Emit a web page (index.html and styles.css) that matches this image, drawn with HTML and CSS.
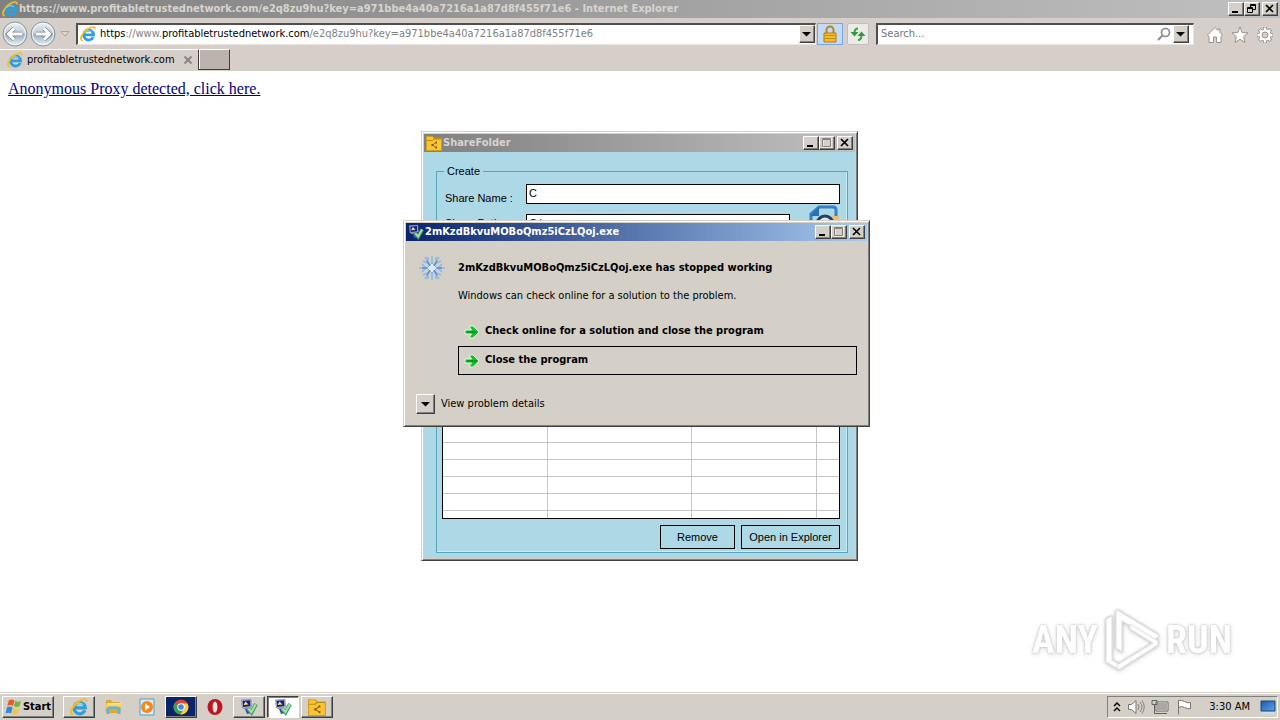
FILE: index.html
```html
<!DOCTYPE html>
<html lang="en">
<head>
<meta charset="utf-8">
<title>profitabletrustednetwork.com - Internet Explorer</title>
<link rel="stylesheet" href="styles.css">
</head>
<body>
<svg class="defs" aria-hidden="true">
  <defs>
    <linearGradient id="gold" x2="0" y2="1"><stop stop-color="#ffe88a"/><stop offset="1" stop-color="#e8a91c"/></linearGradient>
    <linearGradient id="orb" x2="0" y2="1"><stop stop-color="#edf2f5"/><stop offset=".45" stop-color="#c3ced5"/><stop offset=".5" stop-color="#9cabb6"/><stop offset="1" stop-color="#e4f5fc"/></linearGradient>
    <linearGradient id="screen" x2="1" y2="1"><stop stop-color="#1f58a8"/><stop offset="1" stop-color="#5da5e8"/></linearGradient>
  </defs>
  <symbol id="ie" viewBox="0 0 16 16">
    <path d="M13.2 11A5 5 0 1 1 13.6 8.8H5" fill="none" stroke="#2f9fdc" stroke-width="2.800"/>
    <path d="M4.800 6.500q3-3.500 7-.5" fill="none" stroke="#8edaf8" stroke-width="1"/>
    <path d="M2.800 14.900C-1.500 14 2.200 6.500 8 2.800c3.500-2.300 7.300-2.700 6.800.6" fill="none" stroke="#f3bd20" stroke-width="1.700"/>
  </symbol>
  <symbol id="min" viewBox="0 0 10 10"><path d="M1 7h6v2H1z"/></symbol>
  <symbol id="max" viewBox="0 0 10 10"><path d="M1 1h9v9H1z" fill="none" stroke="#fff"/><path d="M.5 .5h8v8h-8zM.5 1.5h8" fill="none" stroke="#85827c"/></symbol>
  <symbol id="restore" viewBox="0 0 10 10"><path d="M3.500 3V.5h5v5H6M3 1.500h6M.5 3.500h5v5h-5zM1 4.500h5" fill="none" stroke="#000"/></symbol>
  <symbol id="close" viewBox="0 0 10 10"><path d="M1 1l7 7M8 1L1 8" stroke="#000" stroke-width="1.700"/></symbol>
  <symbol id="down" viewBox="0 0 10 10"><path d="M0 3h9L4.500 7.500z"/></symbol>
  <symbol id="folder" viewBox="0 0 16 16">
    <path d="M.5 1.500h6L8 3.500h7.500v12H.5z" fill="#fbc531" stroke="#d39d1d"/>
    <path d="M1 5.500h5.500L8 4h7" fill="none" stroke="#b9860f"/>
    <path d="M10 7.500L6.500 10l3.500 2.500" fill="none" stroke="#9a7013"/><path d="M5.500 9h2v2h-2zM9.500 6.500h1.500v2H9.500zM9.500 11.500h1.500v2H9.500z" fill="#7d5c17"/>
  </symbol>
  <symbol id="program" viewBox="0 0 18 16">
    <path d="M1.500 1L11 .5l.5 7.500-9 1z" fill="#dfe4ee" stroke="#7c8494" stroke-width=".8"/>
    <path d="M2.500 1.800l7.700-.5.300 6-7.500.7z" fill="#101e8c"/><path d="M3.500 6l2-3.500L8.500 5.500z" fill="#ffe84a"/>
    <path d="M5 10l4-1 2 5-4 1z" fill="#2d4fae"/><path d="M3.500 9.500l5-.5" stroke="#8e96a8" stroke-width="1.500"/>
    <path d="M8 9.500l3.500 4L16 5" fill="none" stroke="#4c9b62" stroke-width="4"/><path d="M8.200 9.500l3.200 3.500L15.800 5.200" fill="none" stroke="#a5e0ae" stroke-width="2"/>
  </symbol>
  <symbol id="arrow" viewBox="0 0 16 16">
    <path d="M1 6h6.500L5 2h4l6 6-6 6H5l2.500-4H1z" fill="#0fc32a" stroke="#e3f8e2"/>
    <path d="M3 8h10" stroke="#078c20" stroke-width="1.500"/>
  </symbol>
</svg>

<header class="browser">
  <div class="titlebar inactive">
    <svg class="i16"><use href="#ie"/></svg>
    <span class="caption">https://www.profitabletrustednetwork.com/e2q8zu9hu?key=a971bbe4a40a7216a1a87d8f455f71e6 - Internet Explorer</span>
    <div class="controls">
      <button aria-label="Minimize"><svg><use href="#min"/></svg></button><button aria-label="Restore"><svg><use href="#restore"/></svg></button><button class="x" aria-label="Close"><svg><use href="#close"/></svg></button>
    </div>
  </div>
  <nav class="navbar">
    <div class="history">
      <button aria-label="Back"><svg viewBox="0 0 26 26"><circle cx="13" cy="13" r="12" fill="url(#orb)" stroke="#8797a2"/><circle cx="13" cy="13" r="10.500" fill="none" stroke="#f5fafc"/><path d="M20 13H7M12 7.500L6.500 13l5.500 5.500" fill="none" stroke="#76838d" stroke-width="4.500"/><path d="M20 13H7M12 7.500L6.500 13l5.500 5.500" fill="none" stroke="#fff" stroke-width="3"/></svg></button>
      <button aria-label="Forward"><svg viewBox="0 0 26 26"><circle cx="13" cy="13" r="12" fill="url(#orb)" stroke="#8797a2"/><circle cx="13" cy="13" r="10.500" fill="none" stroke="#f5fafc"/><path d="M6 13h13M14 7.500l5.500 5.500-5.500 5.500" fill="none" stroke="#76838d" stroke-width="4.500"/><path d="M6 13h13M14 7.500l5.500 5.500-5.500 5.500" fill="none" stroke="#fff" stroke-width="3"/></svg></button>
      <button class="recent" aria-label="Recent pages"><svg viewBox="0 0 10 8"><path d="M1 1.500h8L5 6z" fill="#ddd9d3" stroke="#aaa59e"/></svg></button>
    </div>
    <div class="field address">
      <svg class="i16"><use href="#ie"/></svg>
      <div class="url" role="textbox" aria-label="Address" contenteditable="true" spellcheck="false"><b>https</b>://www.<b>profitabletrustednetwork.com</b>/e2q8zu9hu?key=a971bbe4a40a7216a1a87d8f455f71e6</div>
      <button class="drop" aria-label="Show addresses"><svg><use href="#down"/></svg></button>
    </div>
    <button class="lock" aria-label="Security report"><svg viewBox="0 0 16 18"><path d="M4.500 9V5a3.500 3.500 0 0 1 7 0v4" fill="none" stroke="#b58720" stroke-width="2"/><path d="M2 8h12v9H2z" fill="#f5bc28" stroke="#b17d12"/><path d="M2.500 10.500h11M2.500 13.500h11" stroke="#c58d15"/></svg></button>
    <button class="refresh" aria-label="Refresh"><svg viewBox="0 0 16 16"><path d="M8 2.500Q4.500 2.500 4.500 7M8 14q3.500 0 3.500-5" fill="none" stroke="#3ca344" stroke-width="2"/><path d="M.5 6h8l-4 4.500zM7.500 10h8l-4-4.500z" fill="#2f9a3a"/></svg></button>
    <div class="field search">
      <input type="text" placeholder="Search..." aria-label="Search">
      <button class="find" aria-label="Find"><svg viewBox="0 0 14 14"><circle cx="8.500" cy="5.500" r="4" fill="none" stroke="#8a8a8a" stroke-width="1.700"/><path d="M5.500 8.500L1 13" stroke="#8a8a8a" stroke-width="2"/></svg></button>
      <button class="drop" aria-label="Search options"><svg><use href="#down"/></svg></button>
    </div>
    <div class="tools">
      <button aria-label="Home"><svg viewBox="0 0 18 18"><path d="M1.500 9L9 1.500 12 4.500V3h2v3.500L16.500 9 15 10.500V16.500h-4.500V11h-3v5.500H3v-6z" fill="#fff" stroke="#96918b"/></svg></button>
      <button aria-label="Favorites"><svg viewBox="0 0 18 18"><path d="M9 1l2.200 5.500 5.800.4-4.400 3.700 1.400 5.900L9 13.300l-5 3.200 1.400-5.900L1 6.900l5.800-.4z" fill="#fff" stroke="#96918b"/></svg></button>
      <button aria-label="Tools"><svg viewBox="0 0 18 18"><g stroke="#96918b" stroke-width="4"><path d="M9 1v16M1 9h16M3.300 3.300l11.400 11.400M14.700 3.300L3.300 14.700"/></g><circle cx="9" cy="9" r="6" fill="#fff" stroke="#96918b"/><path d="M9 1.500v15M1.500 9h15M3.800 3.800l10.400 10.400M14.200 3.800L3.800 14.200" stroke="#fff" stroke-width="2.400"/><circle cx="9" cy="9" r="3" fill="#d6cfc9" stroke="#96918b"/></svg></button>
    </div>
  </nav>
  <div class="tabs">
    <div class="tab"><svg class="i16"><use href="#ie"/></svg><span>profitabletrustednetwork.com</span><button aria-label="Close tab"><svg viewBox="0 0 10 10"><path d="M1.500 1.500l7 7M8.500 1.500l-7 7" stroke="#8b8580" stroke-width="2"/></svg></button></div>
    <button class="newtab" aria-label="New tab"></button>
  </div>
</header>

<main class="page"><a href="#proxy">Anonymous Proxy detected, click here.</a></main>

<section class="window share" aria-label="ShareFolder">
  <div class="titlebar inactive">
    <svg class="i16"><use href="#folder"/></svg>
    <span class="caption">ShareFolder</span>
    <div class="controls">
      <button aria-label="Minimize"><svg><use href="#min"/></svg></button><button aria-label="Maximize" disabled><svg><use href="#max"/></svg></button><button class="x" aria-label="Close"><svg><use href="#close"/></svg></button>
    </div>
  </div>
  <div class="share-body">
    <fieldset>
      <legend>Create</legend>
      <div class="row"><label for="sname">Share Name :</label><input id="sname" type="text" value="C"></div>
      <div class="row second"><label for="spath">Share Path :</label><input id="spath" type="text" value="C:\">
        <button class="browse" aria-label="Browse"><svg viewBox="0 0 32 32"><path d="M3 28V10l8-7h14q3 0 3 3v22z" fill="#add8e6" stroke="#397fc4" stroke-width="3"/><path d="M2 12h9V3z" fill="#286fb7"/><path d="M24 12h7v8h-7z" fill="#e9bd73"/><circle cx="17" cy="20" r="8" fill="#dcecf7" stroke="#243f70" stroke-width="3"/></svg></button></div>
      <div class="grid">
        <table aria-label="Shared folders">
          <colgroup><col class="c1"><col class="c2"><col class="c3"><col></colgroup>
          <tbody>
            <tr><td></td><td></td><td></td><td></td></tr><tr><td></td><td></td><td></td><td></td></tr>
            <tr><td></td><td></td><td></td><td></td></tr><tr><td></td><td></td><td></td><td></td></tr>
            <tr><td></td><td></td><td></td><td></td></tr><tr><td></td><td></td><td></td><td></td></tr>
            <tr><td></td><td></td><td></td><td></td></tr><tr><td></td><td></td><td></td><td></td></tr>
            <tr><td></td><td></td><td></td><td></td></tr><tr><td></td><td></td><td></td><td></td></tr>
            <tr><td></td><td></td><td></td><td></td></tr><tr><td></td><td></td><td></td><td></td></tr>
          </tbody>
        </table>
      </div>
      <div class="actions"><button>Remove</button><button class="wide">Open in Explorer</button></div>
    </fieldset>
  </div>
</section>

<section class="window crash" role="dialog" aria-labelledby="crash-title">
  <div class="titlebar active">
    <svg class="i16"><use href="#program"/></svg>
    <span class="caption">2mKzdBkvuMOBoQmz5iCzLQoj.exe</span>
    <div class="controls">
      <button aria-label="Minimize"><svg><use href="#min"/></svg></button><button aria-label="Maximize" disabled><svg><use href="#max"/></svg></button><button class="x" aria-label="Close"><svg><use href="#close"/></svg></button>
    </div>
  </div>
  <div class="crash-body">
    <svg class="flake" viewBox="0 0 28 28"><g fill="none" stroke="#8db8e2" stroke-width="1.600"><path d="M14 9V2M14 19v7M1 14h26M7 3l6 10M21 3l-6 10M7 25l6-10M21 25l-6-10"/><path d="M5 7l5 2V3M23 7l-5 2V3M5 21l5-2v6M23 21l-5-2v6M4 10l4 4-4 4M24 10l-4 4 4 4"/></g><path d="M14 9l5 5-5 5-5-5z" fill="#dbeaf6" stroke="#7fb0e0"/><path d="M9 7l3 5M19 7l-3 5M9 21l3-5M19 21l-3-5M4 14h5M19 14h5" stroke="#4f8fd2" stroke-width="1.400"/></svg>
    <div class="crash-text">
      <h1 id="crash-title">2mKzdBkvuMOBoQmz5iCzLQoj.exe has stopped working</h1>
      <p>Windows can check online for a solution to the problem.</p>
      <button class="command"><svg class="i16"><use href="#arrow"/></svg>Check online for a solution and close the program</button>
      <button class="command selected"><svg class="i16"><use href="#arrow"/></svg>Close the program</button>
    </div>
  </div>
  <div class="details"><button id="more" aria-label="View problem details"><svg><use href="#down"/></svg></button><label for="more">View problem details</label></div>
</section>

<div class="watermark"><span>ANY</span>
  <svg viewBox="0 0 58 62"><g fill="#fff" stroke="#e3e3e3" stroke-width="1.200" stroke-linejoin="round"><path d="M3 10l6-3v44l6 4v5L3 53z"/><path d="M13 3q0-3 3-1l38 23q3 2 0 4l-3 2-32-19v31l-6-4z"/><path d="M55 32v4L17 60q-3 1-3-2v-2l36-22-23-14v-5z"/></g></svg>
  <span>RUN</span></div>

<footer class="taskbar">
  <button class="start"><svg viewBox="0 0 18 18"><path d="M4 2q3-2 6 0L8.500 8q-3-2-6 0z" fill="#e95a25"/><path d="M11 2.500q3 2 6 0L15.500 8q-3 2-6 0z" fill="#6fb643"/><path d="M2 9.500q3-2 6 0L6.500 16q-3-2-6 0z" fill="#3787d2"/><path d="M9 10q3 2 6 0L13.500 16q-3 2-6 0z" fill="#f7c632"/></svg>Start</button>
  <div class="tasks">
    <button class="raised" aria-label="Internet Explorer"><svg><use href="#ie"/></svg></button>
    <button aria-label="Explorer"><svg viewBox="0 0 18 18"><path d="M2 2h5l1 2h8v11H2z" fill="#dca83b"/><path d="M3 5h14v8H1z" fill="url(#gold)"/><path d="M4 16v-4q0-2 2-2h7q2 0 2 2v4" fill="none" stroke="#60b5df" stroke-width="3"/></svg></button>
    <button aria-label="Media Player"><svg viewBox="0 0 18 18"><path d="M2 1h14v16H2z" fill="#d5ecfa" stroke="#589bcb"/><circle cx="9" cy="9" r="6" fill="#f48a1c"/><path d="M7 5.500l5 3.500-5 3.500z" fill="#fff"/></svg></button>
    <button class="raised navy" aria-label="Chrome"><svg viewBox="0 0 18 18"><circle cx="9" cy="9" r="7.500" fill="#e04434"/><path d="M9 9L2.500 5.200A7.500 7.500 0 0 0 8.500 16.500L12.300 10z" fill="#36a354"/><path d="M9 5.500h6.500A7.500 7.500 0 0 1 8.500 16.500L12.300 10z" fill="#fad03c"/><circle cx="9" cy="9" r="3.700" fill="#fff"/><circle cx="9" cy="9" r="2.800" fill="#4285e8"/></svg></button>
    <button aria-label="Opera"><svg viewBox="0 0 18 18"><ellipse cx="9" cy="9" rx="7.500" ry="8" fill="#bd1820"/><ellipse cx="9" cy="9" rx="2.400" ry="5.500" fill="#eee4e0"/></svg></button>
    <button class="raised" aria-label="Program"><svg><use href="#program"/></svg></button>
    <button class="raised pressed" aria-label="Program error"><svg><use href="#program"/></svg></button>
    <button class="raised" aria-label="ShareFolder"><svg><use href="#folder"/></svg></button>
  </div>
  <div class="tray">
    <svg class="chev" viewBox="0 0 8 12"><path d="M1 5l3-3 3 3M1 10l3-3 3 3" fill="none" stroke="#000" stroke-width="1.500"/></svg>
    <svg viewBox="0 0 18 16"><path d="M1.500 5.500h3L9 1.500v13l-4.500-4h-3z" fill="#fff" stroke="#77736e"/><path d="M11 5q2 3 0 6M13 3q4 5 0 10M15 1.500q4.500 6.500 0 13" fill="none" stroke="#85817c"/></svg>
    <svg viewBox="0 0 18 16"><path d="M5.500 3.500h11v8h-11z" fill="#aaa7a2" stroke="#fff"/><path d="M5 3h12v9H5zM8 14.500h8M1 1.500h5v4H1zM3.500 6v8.500H8" fill="none" stroke="#66625e"/></svg>
    <svg viewBox="0 0 18 16"><path d="M3.500 15.500v-14q3-1 6 1t6 1v6q-3 1-6-1t-6 0" fill="#fff" stroke="#77736e"/></svg>
    <time>3:30 AM</time>
    <button aria-label="Show desktop"><svg viewBox="0 0 16 14"><path d="M1 1h14v10H1z" fill="url(#screen)" stroke="#194781"/><path d="M2 13h12" stroke="#c9deef" stroke-width="2"/></svg></button>
  </div>
</footer>
</body>
</html>
```
FILE: styles.css
```css
* { box-sizing: border-box; }
html, body { height: 100%; }
body {
  margin: 0;
  display: flex;
  flex-direction: column;
  background: #fff;
  color: #000;
  font: 11px/16px "DejaVu Sans Condensed", "DejaVu Sans", sans-serif;
  overflow: hidden;
}
button, input { font: inherit; color: inherit; padding: 0; margin: 0; border: 0; background: none; border-radius: 0; }
button { display: flex; align-items: center; justify-content: center; }
svg { flex: none; }
.defs { position: absolute; width: 0; height: 0; }
.i16 { width: 16px; height: 16px; }

/* Title bars */
.titlebar { display: flex; align-items: center; height: 18px; gap: 1px; padding: 0 2px; font-weight: bold; }
.inactive { background: linear-gradient(90deg, #808080, #c0c0c0); color: #d8d4ce; }
.active { background: linear-gradient(90deg, #0a246a, #a6caf0); color: #fff; }
.caption { flex: 1; min-width: 0; white-space: nowrap; overflow: hidden; }
.controls { display: flex; }
.controls button, .drop, .details button {
  width: 16px; height: 14px;
  background: #d4d0c8;
  border: 1px solid;
  border-color: #fff #404040 #404040 #fff;
  box-shadow: inset -1px -1px #808080;
}
.controls svg, .drop svg, .details svg { width: 10px; height: 10px; }
.controls .x { margin-left: 2px; }

/* Browser frame */
.browser { background: #d5cec9; flex: none; }
.navbar { display: flex; align-items: center; height: 31px; padding: 0 6px 0 2px; }
.history { display: flex; width: 74px; gap: 2px; }
.history button { width: 26px; height: 26px; }
.history svg { width: 26px; height: 26px; }
.history .recent { width: 14px; }
.history .recent svg { width: 10px; height: 8px; }
.field {
  display: flex; align-items: center; height: 22px;
  background: #fff;
  border: 1px solid; border-top-width: 2px; border-left-width: 2px;
  border-color: #505050 #e8e4e0 #e8e4e0 #505050;
}
.address { flex: 735; min-width: 0; padding-left: 2px; gap: 4px; }
.url { flex: 1; min-width: 0; color: #808080; white-space: nowrap; overflow: hidden; }
.url b { color: #000; font-weight: normal; }
.drop { width: 16px; height: 18px; }
.lock { width: 26px; height: 22px; margin-left: 1px; background: #c5daf7; border: 1px solid #79a7e3; }
.lock svg { width: 16px; height: 18px; }
.refresh { width: 22px; height: 22px; margin: 0 7px 0 4px; background: #ebeae9; border: 1px solid #c3beb9; border-radius: 2px; }
.refresh svg { width: 16px; height: 16px; }
.search { flex: 308; min-width: 0; padding: 0 4px 0 3px; }
.search input { flex: 1; min-width: 0; outline: 0; }
.search input::placeholder { color: #757575; opacity: 1; }
.find { width: 18px; }
.find svg { width: 14px; height: 14px; }
.tools { display: flex; gap: 7px; margin-left: 12px; padding-top: 2px; }
.tools svg { width: 18px; height: 18px; }
.tabs { display: flex; height: 22px; border-bottom: 1px solid #d4d0c8; }
.tab { display: flex; align-items: center; width: 198px; padding: 0 5px 0 7px; gap: 4px; border-top: 1px solid #fff; }
.tab span { flex: 1; white-space: nowrap; }
.tab button, .tab button svg { width: 10px; height: 10px; }
.newtab { width: 32px; background: #bcb3ae; border: 1px solid #404040; border-top-color: #fff; box-shadow: inset 1px 0 #fff; }

.page { flex: 1; padding: 9px 8px; font: 16px/18px "Liberation Serif", serif; }
.page a { color: #000080; }

/* Floating windows */
.window {
  position: absolute;
  background: #d4d0c8;
  border: 1px solid; border-color: #d4d0c8 #404040 #404040 #d4d0c8;
  box-shadow: inset 1px 1px #fff, inset -1px -1px #808080;
  padding: 2px;
}
.share { left: 421px; top: 131px; width: 437px; font: 11px/14px "Liberation Sans", sans-serif; }
.share .titlebar { height: 18px; font: bold 11px/16px "DejaVu Sans Condensed", "DejaVu Sans", sans-serif; }
.share-body { background: #add8e6; padding: 12px 7px 5px 12px; }
fieldset { margin: 0; padding: 6px 7px 3px 5px; border: 1px solid #57a5bd; box-shadow: inset -1px -1px #c8edf7; min-width: 0; }
legend { padding: 0 3px; margin-left: 2px; }
.row { display: flex; height: 20px; }
.row label { width: 84px; padding: 7px 0 0 3px; white-space: nowrap; }
.row input { flex: 1; min-width: 0; height: 20px; padding: 0 2px 2px; background: #fff; border: 1px solid #000; }
.second { margin-top: 10px; }
.second label { padding-top: 2px; }
.browse { width: 32px; height: 32px; margin: -10px 0 0 18px; }
.browse svg { width: 32px; height: 32px; }
.grid { height: 196px; margin-top: 89px; overflow: hidden; background: #fff; border: 1px solid #000; }
table { width: 100%; table-layout: fixed; border-collapse: separate; border-spacing: 0; }
.c1 { width: 105px; }
.c2 { width: 144px; }
.c3 { width: 125px; }
td { height: 17px; padding: 0; border: solid #c6c6c6; border-width: 0 1px 1px 0; }
td:last-child { border-right: 0; }
.actions { display: flex; justify-content: flex-end; gap: 6px; margin-top: 6px; }
.actions button { width: 75px; height: 24px; border: 1px solid #000; }
.actions .wide { width: 99px; }

.crash { left: 403px; top: 220px; width: 467px; }
.crash-body { display: flex; padding: 13px 10px 0 12px; }
.flake { width: 28px; height: 28px; margin-right: 12px; }
.crash-text { flex: 1; min-width: 0; padding-top: 6px; }
h1 { margin: 0; font: inherit; font-weight: bold; white-space: nowrap; }
p { margin: 12px 0 13px; white-space: nowrap; }
.command { width: 100%; height: 29px; gap: 5px; padding: 0 5px 2px; justify-content: flex-start; border: 1px solid transparent; font-weight: bold; text-align: left; white-space: nowrap; }
.command svg { margin-top: 2px; }
.selected { border-color: #000; }
.details { display: flex; align-items: center; gap: 6px; padding: 19px 10px 10px; }
.details button { width: 19px; height: 20px; }

/* Watermark */
.watermark { position: absolute; right: 48px; bottom: 49px; display: flex; align-items: center; gap: 5px; color: #fff; font: bold 38px/62px "Roboto Condensed", Roboto, sans-serif; filter: drop-shadow(0 0 1px #bbb) drop-shadow(0 1px 2px #ddd); }
.watermark svg { width: 58px; height: 62px; }

/* Taskbar */
.taskbar { flex: none; display: flex; align-items: center; height: 28px; padding: 1px 2px 0; background: #d4d0c8; border-top: 1px solid #d4d0c8; box-shadow: inset 0 1px #fff; }
.start, .raised { border: 1px solid; border-color: #fff #404040 #404040 #fff; box-shadow: inset -1px -1px #808080; }
.start { width: 52px; height: 22px; gap: 1px; font-weight: bold; }
.start svg { width: 17px; height: 18px; }
.tasks { display: flex; gap: 2px; margin-left: 9px; }
.tasks button { width: 32px; height: 22px; }
.tasks svg { width: 18px; height: 18px; }
.navy { background: #0a246a; }
.pressed { background: #fff; border-color: #404040 #fff #fff #404040; box-shadow: inset 1px 1px #808080; }
.tray { display: flex; align-items: center; gap: 6px; height: 22px; margin-left: auto; padding: 0 1px 0 5px; border: 1px solid; border-color: #808080 #fff #fff #808080; }
.tray svg { width: 18px; height: 16px; }
.tray .chev { width: 8px; height: 12px; }
.tray time { margin: 0 4px 0 10px; white-space: nowrap; }
.tray button svg { width: 16px; height: 14px; }
```
